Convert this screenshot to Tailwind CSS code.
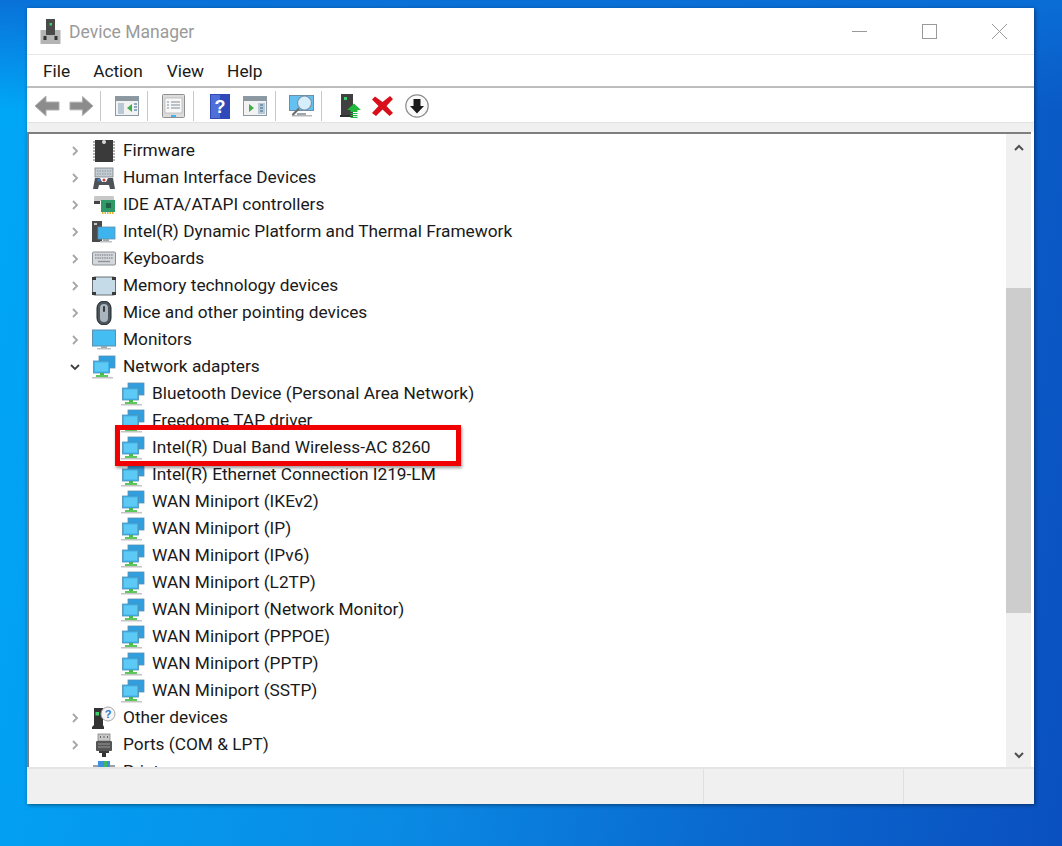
<!DOCTYPE html>
<html lang="en">
<head>
  <meta charset="UTF-8" />
  <title>Device Manager</title>
  <script src="https://cdn.jsdelivr.net/npm/@tailwindcss/browser@4"></script>
</head>
<body class="relative h-[846px] w-[1062px] overflow-hidden bg-[linear-gradient(180deg,rgba(10,110,215,0.95)_0px,rgba(10,110,215,0)_110px),linear-gradient(100deg,#00a8f8_0%,#0a8ae4_45%,#0a6bd0_70%,#0a50c0_100%)] font-['Roboto',sans-serif] text-[#1a1a1a]">

  <svg class="hidden" xmlns="http://www.w3.org/2000/svg">
    <symbol id="chev-r" viewBox="0 0 12 12"><path d="M4 2l4 4-4 4" fill="none" stroke="#a6a6a6" stroke-width="1.8"/></symbol>
    <symbol id="chev-d" viewBox="0 0 12 12"><path d="M2 4l4 4 4-4" fill="none" stroke="#404040" stroke-width="1.8"/></symbol>
    <symbol id="net" viewBox="0 0 24 24">
      <rect x="7" y="1" width="16" height="12" fill="#2f9fe0" stroke="#5c8fb0" stroke-width=".8"/>
      <rect x="1.500" y="6" width="16" height="12" fill="#3cb4ee" stroke="#4f8fb5" stroke-width=".8"/>
      <rect x="3" y="7.500" width="13" height="9" fill="#5ccaf5"/>
      <rect x="8" y="18" width="4" height="3" fill="#48b848"/>
      <rect x="4" y="20" width="12" height="2" fill="#5cc85c"/>
      <rect x="0" y="22" width="21" height="1.500" fill="#c4c4c4"/>
    </symbol>
  </svg>

  <div class="absolute left-[27px] top-[8px] flex h-[796px] w-[1007px] flex-col bg-white shadow-[1px_1px_4px_rgba(0,0,0,0.45)]">
    <!-- title bar -->
    <div class="flex h-[47px] shrink-0 items-center border-b border-[#e6e6e6] pl-[13px]">
      <svg class="h-[25px] w-[21px]" viewBox="0 0 21 25">
        <rect x="6" y="0" width="9" height="13" fill="#4a4a4a"/>
        <rect x="9.500" y="4" width="2.500" height="2.500" fill="#3ad06a"/>
        <rect x="0.500" y="11" width="20" height="14" fill="#b4b4b4"/>
        <rect x="6" y="11" width="9" height="5" fill="#4a4a4a"/>
        <rect x="3.500" y="17" width="3" height="4" fill="#333"/>
        <rect x="14.500" y="17" width="3" height="4" fill="#333"/>
      </svg>
      <span class="ml-[8px] pt-[2px] text-[17.500px] text-[#9a9a9a]">Device Manager</span>
      <div class="ml-auto flex items-center">
        <div class="h-px w-[15px] bg-[#999]"></div>
        <div class="ml-[55px] h-[15px] w-[15px] border border-[#999]"></div>
        <svg class="ml-[55px] mr-[27px] h-[15px] w-[15px]" viewBox="0 0 15 15"><path d="M0 0l15 15M15 0L0 15" stroke="#999" stroke-width="1"/></svg>
      </div>
    </div>

    <!-- menu bar -->
    <div class="flex h-[33px] shrink-0 items-center border-b-2 border-[#bdbdbd] pl-[16px] pt-[3px] text-[17.300px]">
      <span>File</span>
      <span class="ml-[23px]">Action</span>
      <span class="ml-[24px]">View</span>
      <span class="ml-[23px]">Help</span>
    </div>

    <!-- toolbar -->
    <div class="flex h-[34px] shrink-0 items-center pl-[7px] pt-[2px]">
      <svg class="h-[24px] w-[26px]" viewBox="0 0 26 24"><path d="M1 12L12 2v6h13v8H12v6z" fill="#8c8c8c" stroke="#b0b0b0"/></svg>
      <svg class="ml-[9px] h-[24px] w-[25px]" viewBox="0 0 26 24"><path d="M25 12L14 2v6H1v8h13v6z" fill="#8c8c8c" stroke="#b0b0b0"/></svg>
      <div class="ml-[6px] h-[30px] w-px bg-[#c8c8c8]"></div>
      <svg class="ml-[14px] h-[20px] w-[24px]" viewBox="0 0 24 20">
        <rect x=".5" y=".5" width="23" height="19" fill="#f2f2f2" stroke="#8c9aa5"/>
        <rect x="1" y="1" width="22" height="4" fill="#8c98a0"/>
        <rect x="3" y="7" width="6" height="11" fill="#b8c8d4"/>
        <path d="M17 8v8l-5-4z" fill="#3fae4a"/>
        <path d="M19 8h3M19 11h3M19 14h3" stroke="#6f93ad" stroke-width="1.500"/>
      </svg>
      <div class="ml-[8px] h-[30px] w-px bg-[#c8c8c8]"></div>
      <svg class="ml-[14px] h-[24px] w-[23px]" viewBox="0 0 23 24">
        <rect x=".5" y=".5" width="22" height="23" rx="1" fill="#dcdcdc" stroke="#8f8f8f"/>
        <rect x="3" y="4" width="17" height="15" fill="#f8f8f8" stroke="#a8a8a8" stroke-width=".6"/>
        <path d="M5 8h2M9 8h9M5 11h2M9 11h9M5 14h2M9 14h9" stroke="#7d8c98" stroke-width="1.200"/>
        <rect x="9" y="21" width="5" height="2" fill="#3db4ee"/>
      </svg>
      <div class="ml-[8px] h-[30px] w-px bg-[#c8c8c8]"></div>
      <svg class="ml-[16px] h-[25px] w-[20px]" viewBox="0 0 20 25">
        <rect width="20" height="25" fill="#2f49b8"/>
        <rect x="1" y="1" width="9" height="23" fill="#4f6fd8"/>
        <text x="10" y="19" text-anchor="middle" font-family="Liberation Sans" font-weight="700" font-size="18" fill="#fff">?</text>
      </svg>
      <svg class="ml-[13px] h-[20px] w-[24px]" viewBox="0 0 24 20">
        <rect x=".5" y=".5" width="23" height="19" fill="#f2f2f2" stroke="#8c9aa5"/>
        <rect x="1" y="1" width="22" height="4" fill="#8c98a0"/>
        <path d="M6 8v8l5-4z" fill="#3fae4a"/>
        <rect x="15" y="7" width="7" height="11" fill="#b8c8d4"/>
        <path d="M17 9h3M17 12h3M17 15h3" stroke="#5f86a3" stroke-width="1.500"/>
      </svg>
      <div class="ml-[8px] h-[30px] w-px bg-[#c8c8c8]"></div>
      <svg class="ml-[13px] h-[26px] w-[25px]" viewBox="0 0 25 26">
        <rect x=".5" y="2.500" width="24" height="15" fill="#63c0f0" stroke="#6c8ea6"/>
        <rect x="8" y="20" width="9" height="2" fill="#9aa8b0"/>
        <rect x="3" y="22" width="20" height="1.500" fill="#b8b8b8"/>
        <circle cx="15.500" cy="10" r="7" fill="#d6eefb" stroke="#7a95a6" stroke-width="1.200"/>
        <path d="M10 15.500l-6.500 6.500" stroke="#6b6b6b" stroke-width="2.200"/>
      </svg>
      <div class="ml-[7px] h-[30px] w-px bg-[#c8c8c8]"></div>
      <svg class="ml-[18px] h-[24px] w-[21px]" viewBox="0 0 21 24">
        <rect x="1" y="0" width="12" height="21" fill="#404040"/>
        <rect x="4" y="3" width="3" height="3" fill="#3ad06a"/>
        <rect x="0" y="21" width="13" height="2" fill="#303030"/>
        <path d="M14 9.500l7 6.500h-3.500v2h-7v-2H7z" fill="#22b83c"/>
        <path d="M10.500 19.500h7M10.500 21.500h7M10.500 23.400h7" stroke="#22b83c" stroke-width="1.200"/>
      </svg>
      <svg class="ml-[11px] h-[20px] w-[21px]" viewBox="0 0 21 20"><path d="M3 .5l7.500 5.500L18 0l3 3-6.500 7 6.500 7-3.500 3-7-6.500L4 20 0 17l6.500-7L0 3.500z" fill="#d8101c"/></svg>
      <svg class="ml-[12px] h-[24px] w-[24px]" viewBox="0 0 24 24">
        <circle cx="12" cy="12" r="11.200" fill="#fafafa" stroke="#8a8a8a" stroke-width="1.200"/>
        <path d="M8.500 5h7v7h3.500l-7 7.500L5 12h3.500z" fill="#1a1a1a"/>
      </svg>
    </div>

    <div class="h-[10px] shrink-0 border-t border-[#e2e2e2] bg-[#f0f0f0]"></div>

    <!-- tree -->
    <div class="mr-[3px] flex min-h-0 flex-1 border-l-2 border-t-2 border-[#7f7f7f]">
      <div class="min-w-0 flex-1 overflow-hidden pl-[40px] pt-[3px] text-[17.300px] leading-[27px]">
        <div class="flex h-[27px] items-center"><svg class="h-[12px] w-[12px]"><use href="#chev-r"/></svg><svg class="ml-[11px] h-[24px] w-[24px]" viewBox="0 0 24 24"><rect x="3" y="1" width="18" height="22" fill="#3a3a3a"/><path d="M1 3h2M1 6h2M1 9h2M1 12h2M1 15h2M1 18h2M1 21h2M21 3h2M21 6h2M21 9h2M21 12h2M21 15h2M21 18h2M21 21h2" stroke="#9a9a9a" stroke-width="1.400"/><circle cx="12" cy="3" r="2" fill="#d8d8d8"/></svg><span class="ml-[7px]">Firmware</span></div>
        <div class="flex h-[27px] items-center"><svg class="h-[12px] w-[12px]"><use href="#chev-r"/></svg><svg class="ml-[11px] h-[24px] w-[24px]" viewBox="0 0 24 24"><rect x="3" y="2" width="18" height="9" fill="#c4ccd4" stroke="#7a8288" stroke-width=".8"/><path d="M5 5h14M5 8h14" stroke="#8a9298" stroke-dasharray="1.500 1"/><path d="M1 23l2-11h5l2 4h4l2-4h5l2 11h-5l-1-4h-10l-1 4z" fill="#4d5359"/><circle cx="7" cy="14" r="1.500" fill="#3d80d8"/><circle cx="12" cy="14" r="1.500" fill="#d04040"/></svg><span class="ml-[7px]">Human Interface Devices</span></div>
        <div class="flex h-[27px] items-center"><svg class="h-[12px] w-[12px]"><use href="#chev-r"/></svg><svg class="ml-[11px] h-[24px] w-[24px]" viewBox="0 0 24 24"><rect x="2" y="3" width="20" height="5" rx="1" fill="#c8c8c8"/><rect x="2" y="8" width="6" height="3" fill="#444"/><rect x="9" y="7" width="14" height="12" fill="#2f9a68"/><rect x="14" y="10" width="5" height="5" fill="#1f5f48"/><path d="M10 20h12" stroke="#e0b030" stroke-width="2" stroke-dasharray="1.500 1"/></svg><span class="ml-[7px]">IDE ATA/ATAPI controllers</span></div>
        <div class="flex h-[27px] items-center"><svg class="h-[12px] w-[12px]"><use href="#chev-r"/></svg><svg class="ml-[11px] h-[24px] w-[24px]" viewBox="0 0 24 24"><rect x="0" y="1" width="10" height="21" fill="#4a4a4a"/><rect x="2" y="3" width="3" height="2" fill="#c8c8c8"/><rect x="6" y="7" width="17" height="12" fill="#3db4ee" stroke="#5f8fae" stroke-width=".8"/><rect x="11" y="19" width="6" height="2" fill="#9aa8b0"/><rect x="8" y="21" width="12" height="1.500" fill="#c0c0c0"/></svg><span class="ml-[7px]">Intel(R) Dynamic Platform and Thermal Framework</span></div>
        <div class="flex h-[27px] items-center"><svg class="h-[12px] w-[12px]"><use href="#chev-r"/></svg><svg class="ml-[11px] h-[24px] w-[24px]" viewBox="0 0 24 24"><rect x="0.500" y="5" width="23" height="13" rx="1" fill="#d4d8dc" stroke="#8a9096"/><path d="M3 8h18M3 11h18" stroke="#8f959b" stroke-width="1.400" stroke-dasharray="1.500 .8"/><path d="M6 14.500h12" stroke="#8f959b" stroke-width="1.400"/></svg><span class="ml-[7px]">Keyboards</span></div>
        <div class="flex h-[27px] items-center"><svg class="h-[12px] w-[12px]"><use href="#chev-r"/></svg><svg class="ml-[11px] h-[24px] w-[24px]" viewBox="0 0 24 24"><rect x=".5" y="3" width="23" height="18" rx="2" fill="#c6dbe8" stroke="#6a7075"/><path d="M0 3h4v3H0zM20 3h4v3h-4zM0 18h4v3H0zM20 18h4v3h-4z" fill="#3a3a3a"/></svg><span class="ml-[7px]">Memory technology devices</span></div>
        <div class="flex h-[27px] items-center"><svg class="h-[12px] w-[12px]"><use href="#chev-r"/></svg><svg class="ml-[11px] h-[24px] w-[24px]" viewBox="0 0 24 24"><rect x="5" y="0" width="14" height="24" rx="7" fill="#4a5660" stroke="#222"/><rect x="8" y="3" width="8" height="18" rx="4" fill="#aab4bd"/><rect x="11" y="5" width="2" height="6" rx="1" fill="#3a3a3a"/></svg><span class="ml-[7px]">Mice and other pointing devices</span></div>
        <div class="flex h-[27px] items-center"><svg class="h-[12px] w-[12px]"><use href="#chev-r"/></svg><svg class="ml-[11px] h-[24px] w-[24px]" viewBox="0 0 24 24"><rect x=".5" y="2" width="23" height="16" fill="#43bdf2" stroke="#5f8fae"/><rect x="9" y="18" width="6" height="2" fill="#9aa8b0"/><rect x="5" y="20" width="14" height="1.500" fill="#c0c0c0"/></svg><span class="ml-[7px]">Monitors</span></div>
        <div class="flex h-[27px] items-center"><svg class="h-[12px] w-[12px]"><use href="#chev-d"/></svg><svg class="ml-[11px] h-[24px] w-[24px]"><use href="#net"/></svg><span class="ml-[7px]">Network adapters</span></div>
        <div class="flex h-[27px] items-center pl-[52px]"><svg class="h-[24px] w-[24px]"><use href="#net"/></svg><span class="ml-[7px]">Bluetooth Device (Personal Area Network)</span></div>
        <div class="flex h-[27px] items-center pl-[52px]"><svg class="h-[24px] w-[24px]"><use href="#net"/></svg><span class="ml-[7px]">Freedome TAP driver</span></div>
        <div class="flex h-[27px] items-center pl-[52px]"><svg class="h-[24px] w-[24px]"><use href="#net"/></svg><span class="ml-[7px]">Intel(R) Dual Band Wireless-AC 8260</span></div>
        <div class="flex h-[27px] items-center pl-[52px]"><svg class="h-[24px] w-[24px]"><use href="#net"/></svg><span class="ml-[7px]">Intel(R) Ethernet Connection I219-LM</span></div>
        <div class="flex h-[27px] items-center pl-[52px]"><svg class="h-[24px] w-[24px]"><use href="#net"/></svg><span class="ml-[7px]">WAN Miniport (IKEv2)</span></div>
        <div class="flex h-[27px] items-center pl-[52px]"><svg class="h-[24px] w-[24px]"><use href="#net"/></svg><span class="ml-[7px]">WAN Miniport (IP)</span></div>
        <div class="flex h-[27px] items-center pl-[52px]"><svg class="h-[24px] w-[24px]"><use href="#net"/></svg><span class="ml-[7px]">WAN Miniport (IPv6)</span></div>
        <div class="flex h-[27px] items-center pl-[52px]"><svg class="h-[24px] w-[24px]"><use href="#net"/></svg><span class="ml-[7px]">WAN Miniport (L2TP)</span></div>
        <div class="flex h-[27px] items-center pl-[52px]"><svg class="h-[24px] w-[24px]"><use href="#net"/></svg><span class="ml-[7px]">WAN Miniport (Network Monitor)</span></div>
        <div class="flex h-[27px] items-center pl-[52px]"><svg class="h-[24px] w-[24px]"><use href="#net"/></svg><span class="ml-[7px]">WAN Miniport (PPPOE)</span></div>
        <div class="flex h-[27px] items-center pl-[52px]"><svg class="h-[24px] w-[24px]"><use href="#net"/></svg><span class="ml-[7px]">WAN Miniport (PPTP)</span></div>
        <div class="flex h-[27px] items-center pl-[52px]"><svg class="h-[24px] w-[24px]"><use href="#net"/></svg><span class="ml-[7px]">WAN Miniport (SSTP)</span></div>
        <div class="flex h-[27px] items-center"><svg class="h-[12px] w-[12px]"><use href="#chev-r"/></svg><svg class="ml-[11px] h-[24px] w-[24px]" viewBox="0 0 24 24"><path d="M2 2h9v17l1 2v2H0v-2l2-2z" fill="#333"/><rect x="3.500" y="6" width="3.500" height="3.500" fill="#3ad06a"/><circle cx="16" cy="8" r="7" fill="#f4f4f4" stroke="#a8a8a8"/><text x="16" y="12" text-anchor="middle" font-family="Liberation Sans" font-weight="700" font-size="11" fill="#2f74d0">?</text></svg><span class="ml-[7px]">Other devices</span></div>
        <div class="flex h-[27px] items-center"><svg class="h-[12px] w-[12px]"><use href="#chev-r"/></svg><svg class="ml-[11px] h-[24px] w-[24px]" viewBox="0 0 24 24"><rect x="6" y="1" width="12" height="7" fill="#c8c8c8" stroke="#777" stroke-width=".7"/><path d="M8.500 3v2M12 3v2M15.500 3v2" stroke="#666"/><rect x="4" y="8" width="16" height="10" rx="1" fill="#555"/><path d="M6 11h12M6 14h12" stroke="#9a9a9a" stroke-width="1.200"/><rect x="7" y="18" width="10" height="2" fill="#3a3a3a"/><rect x="10" y="20" width="4" height="4" fill="#333"/></svg><span class="ml-[7px]">Ports (COM &amp; LPT)</span></div>
        <div class="flex h-[27px] items-center"><svg class="h-[12px] w-[12px]"><use href="#chev-r"/></svg><svg class="ml-[11px] h-[24px] w-[24px]" viewBox="0 0 24 24"><rect x="1" y="5" width="22" height="16" fill="#9aa2a8"/><rect x="6" y="1" width="6" height="8" fill="#3f8fe0"/><rect x="12" y="1" width="3" height="8" fill="#3fb860"/><rect x="15" y="1" width="3" height="8" fill="#3f8fe0"/></svg><span class="ml-[7px]">Print queues</span></div>
      </div>

      <!-- scrollbar -->
      <div class="flex w-[25px] shrink-0 flex-col bg-[#f0f0f0]">
        <div class="flex h-[25px] shrink-0 items-center justify-center pt-[2px]"><svg class="h-[10px] w-[12px]" viewBox="0 0 12 10"><path d="M2 7l4-4 4 4" fill="none" stroke="#505050" stroke-width="2"/></svg></div>
        <div class="mt-[129px] h-[325px] bg-[#cdcdcd]"></div>
        <div class="mt-auto flex h-[25px] shrink-0 items-center justify-center"><svg class="h-[10px] w-[12px]" viewBox="0 0 12 10"><path d="M2 3l4 4 4-4" fill="none" stroke="#505050" stroke-width="2"/></svg></div>
      </div>
    </div>

    <!-- status bar -->
    <div class="flex h-[37px] shrink-0 border-t-2 border-[#e4e4e4] bg-[#f0f0f0] pr-[3px]">
      <div class="flex-1"></div>
      <div class="w-[200px] border-l border-[#e0e0e0]"></div>
      <div class="w-[128px] border-l border-[#e0e0e0]"></div>
    </div>

    <!-- red annotation over the tree -->
    <div class="absolute left-[88px] top-[417px] h-[41px] w-[346px] border-[5px] border-[#f00000] shadow-[1px_2px_3px_rgba(0,0,0,0.4)]"></div>
  </div>
</body>
</html>
